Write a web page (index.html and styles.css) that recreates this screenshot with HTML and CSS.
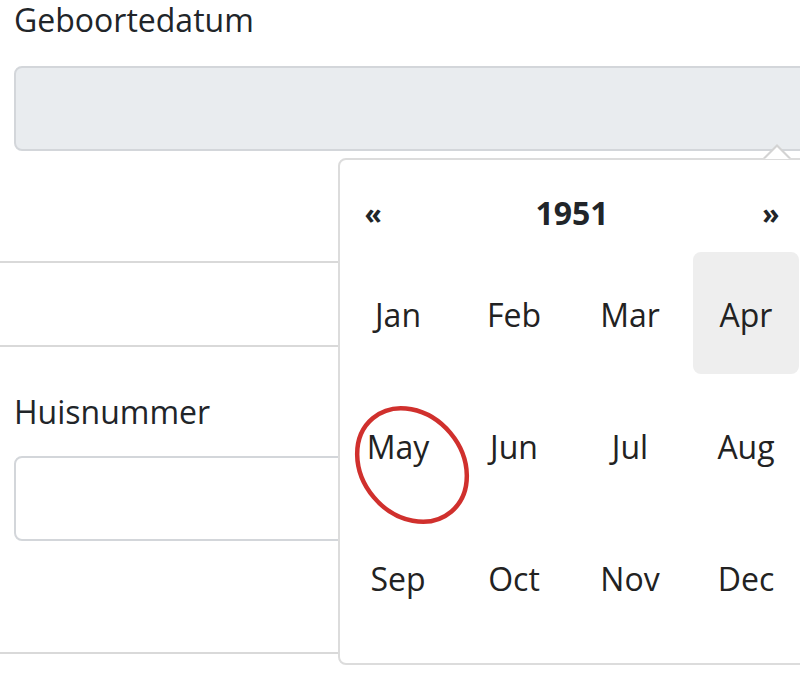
FILE: index.html
```html
<!DOCTYPE html>
<html lang="nl">
<head>
<meta charset="utf-8">
<title>Geboortedatum</title>
<link rel="stylesheet" href="styles.css">
</head>
<body>
<div class="page">
  <div class="field field-first">
    <label class="lbl">Geboortedatum</label>
    <div class="input input-readonly"></div>
  </div>
  <div class="rule rule-a"></div>
  <div class="rule rule-b"></div>
  <div class="field field-second">
    <label class="lbl">Huisnummer</label>
    <div class="input"></div>
  </div>
  <div class="rule rule-c"></div>

  <div class="datepicker">
    <div class="dp-head">
      <span class="dp-prev">«</span>
      <span class="dp-switch">1951</span>
      <span class="dp-next">»</span>
    </div>
    <div class="dp-months">
      <span class="month">Jan</span>
      <span class="month">Feb</span>
      <span class="month">Mar</span>
      <span class="month month-hover">Apr</span>
      <span class="month">May</span>
      <span class="month">Jun</span>
      <span class="month">Jul</span>
      <span class="month">Aug</span>
      <span class="month">Sep</span>
      <span class="month">Oct</span>
      <span class="month">Nov</span>
      <span class="month">Dec</span>
    </div>
  </div>

  <svg class="marker" width="130" height="130" viewBox="0 0 130 130">
    <ellipse cx="62" cy="65" rx="50" ry="61" transform="rotate(-40 62 65)" fill="none" stroke="#d0302d" stroke-width="4.5"/>
  </svg>
</div>
</body>
</html>
```

FILE: styles.css
```css
html, body {
  margin: 0;
  padding: 0;
  overflow: hidden;
  background: #ffffff;
}

body {
  font-family: "Open Sans", "Noto Sans", sans-serif;
  color: #212529;
  font-size: 32px;
}

.page {
  position: relative;
  width: 800px;
  height: 673px;
  overflow: hidden;
}

.field {
  padding-left: 14px;
  display: flex;
  flex-direction: column;
}

.lbl {
  display: block;
  font-size: 32px;
  line-height: 40px;
  height: 40px;
}

.field-first .input {
  margin-top: 26px;
}

.input {
  width: 840px;
  height: 85px;
  box-sizing: border-box;
  border: 2px solid #d3d6da;
  border-radius: 8px;
  background: #ffffff;
}

.input-readonly {
  background: #e9ecef;
}

.rule {
  border-top: 2px solid #d9d9d9;
  height: 0;
}

.rule-a {
  margin-top: 110px;
}

.rule-b {
  margin-top: 82px;
}

.field-second {
  margin-top: 45px;
}

.field-second .input {
  margin-top: 24px;
}

.rule-c {
  margin-top: 111px;
}

/* datepicker popup */
.datepicker {
  position: absolute;
  left: 338px;
  top: 158px;
  width: 470px;
  box-sizing: border-box;
  border: 2px solid #dcdcdc;
  border-radius: 8px;
  background: #ffffff;
  padding: 5px 0 20px;
}

.datepicker::before,
.datepicker::after {
  content: "";
  position: absolute;
  width: 0;
  height: 0;
  border-left-style: solid;
  border-right-style: solid;
  border-bottom-style: solid;
  border-left-color: transparent;
  border-right-color: transparent;
}

.datepicker::before {
  left: 423px;
  top: -16px;
  border-left-width: 14px;
  border-right-width: 14px;
  border-bottom-width: 14px;
  border-bottom-color: #d3d3d3;
}

.datepicker::after {
  left: 425px;
  top: -13px;
  border-left-width: 12px;
  border-right-width: 12px;
  border-bottom-width: 12px;
  border-bottom-color: #ffffff;
}

.dp-head {
  width: 464px;
  display: grid;
  grid-template-columns: 1fr 5fr 1fr;
  align-items: center;
  height: 82px;
  box-sizing: border-box;
  padding-top: 14px;
  font-weight: 700;
  text-align: center;
  line-height: 40px;
}

.dp-prev,
.dp-next {
  font-size: 28px;
}

.dp-switch {
  font-size: 32px;
}

.dp-months {
  width: 464px;
  display: grid;
  grid-template-columns: repeat(4, 1fr);
}

.month {
  margin: 5px;
  height: 122px;
  box-sizing: border-box;
  padding-top: 3px;
  line-height: 119px;
  text-align: center;
  border-radius: 8px;
  color: #222222;
}

.month-hover {
  background: #eeeeee;
}

.marker {
  position: absolute;
  left: 350px;
  top: 400px;
  pointer-events: none;
}
```
